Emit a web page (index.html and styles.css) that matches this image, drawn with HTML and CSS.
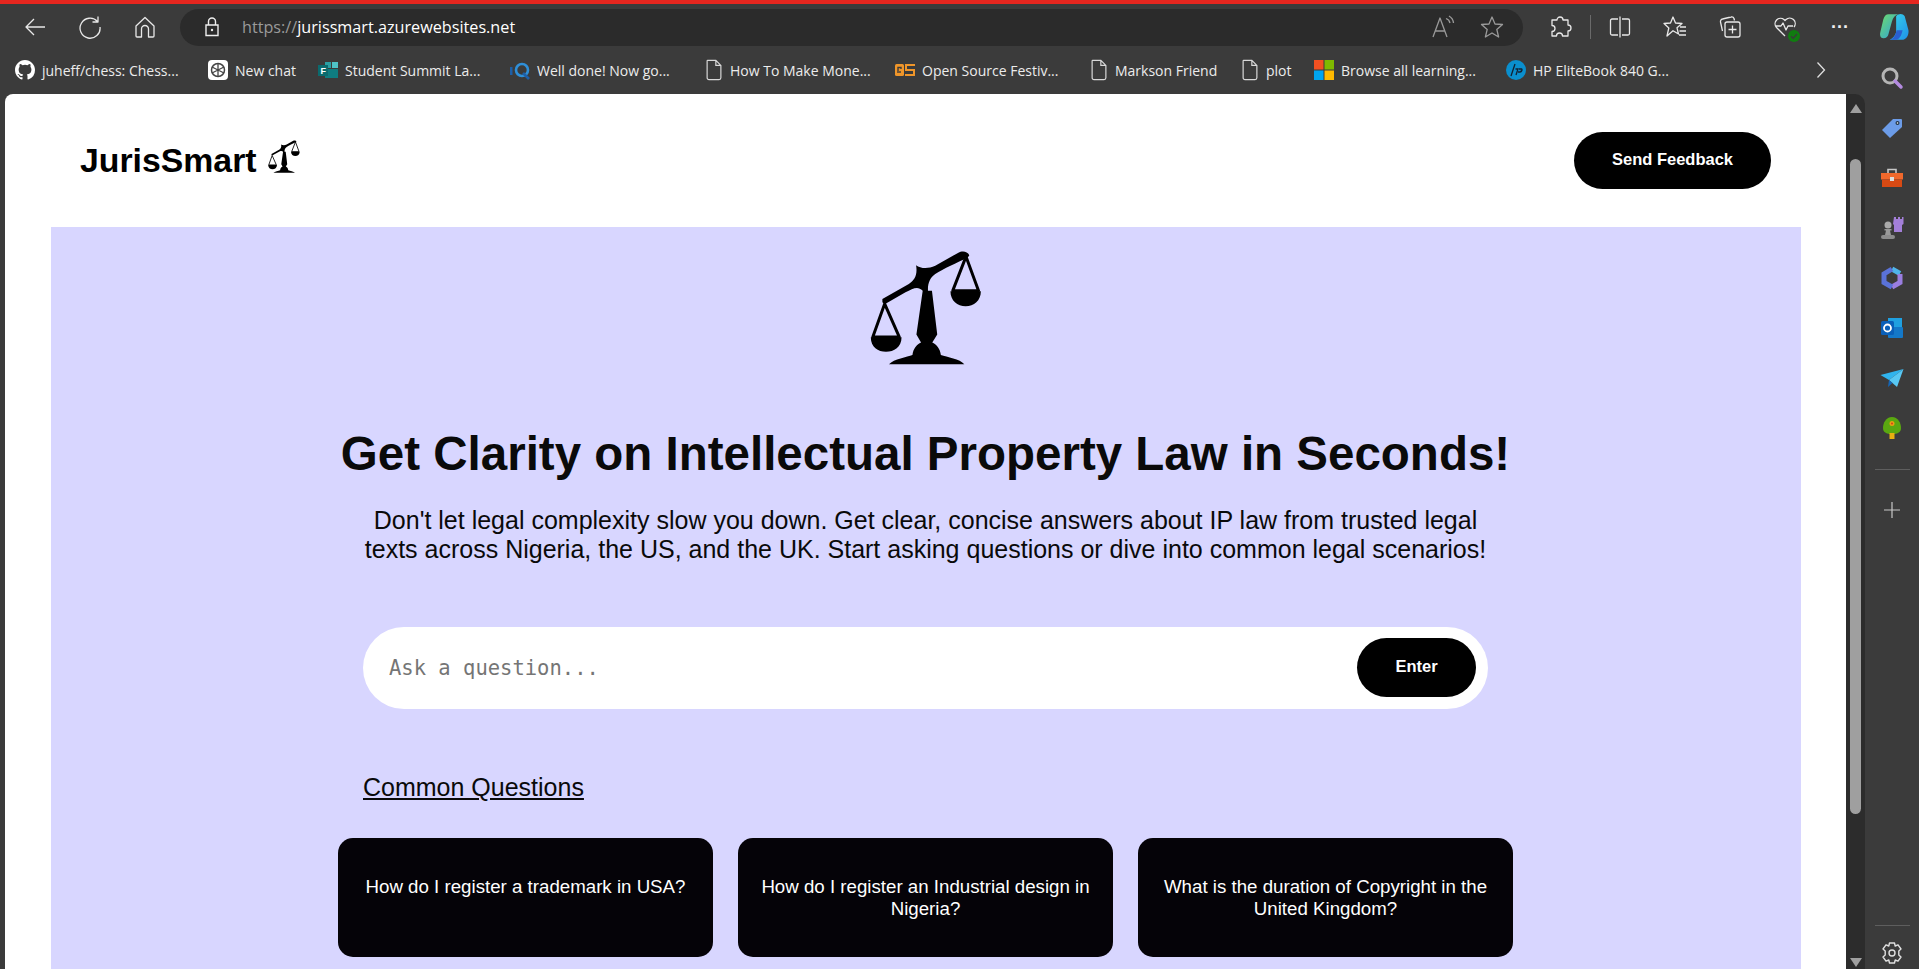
FILE: index.html
```html
<!DOCTYPE html>
<html lang="en">
<head>
  <meta charset="UTF-8" />
  <meta name="viewport" content="width=device-width, initial-scale=1" />
  <title>JurisSmart</title>
  <link rel="stylesheet" href="styles.css">
</head>
<body>

<svg class="defs" aria-hidden="true">
  <defs>
    <symbol id="scales" viewBox="88 42 338 348">
      <path d="M125 190 L205 145 C222 134 232 118 227 88 C240 98 262 100 285 90 L355 50 C365 44 382 44 388 58 L384 64 C350 82 310 98 285 115 C268 127 262 145 263 165 L275 165 L291 298 L276 322 C288 328 300 340 302 360 C320 366 360 372 373 388 L145 388 C160 372 200 366 216 360 C218 340 230 328 242 322 L228 298 L247 165 C232 150 218 158 195 170 L132 206 L125 200 Z" fill="#000"/>
      <path d="M132 205 L96 305 L176 305 Z M378 62 L338 165 L416 165 Z" fill="none" stroke="#000" stroke-width="9" stroke-linejoin="round"/>
      <path d="M90 306 L183 306 C183 336 160 350 136 350 C112 350 90 336 90 306 Z M331 167 L423 167 C423 196 402 212 377 212 C352 212 331 196 331 167 Z" fill="#000"/>
    </symbol>
    <symbol id="doc" viewBox="0 0 18 24">
      <path d="M2 1.5 H11 L16.5 7 V20.5 A2 2 0 0 1 14.5 22.5 H3.5 A2 2 0 0 1 1.5 20.5 V2 Z M11 1.5 V7 H16.5" fill="none" stroke="#d8d8d8" stroke-width="1.3"/>
    </symbol>
    <linearGradient id="copilot-a" x1="0" y1="0" x2="1" y2="1">
      <stop offset="0" stop-color="#38d6e8"/><stop offset="1" stop-color="#1f8fe8"/>
    </linearGradient>
    <linearGradient id="copilot-b" x1="0" y1="0" x2="1" y2="1">
      <stop offset="0" stop-color="#6fdc6a"/><stop offset="1" stop-color="#2b9fe0"/>
    </linearGradient>
  </defs>
</svg>

<header class="toolbar">
  <div class="nav-btns">
    <svg class="ico" viewBox="0 0 24 24"><path d="M22 12 H3 M11 4 L3 12 L11 20"/></svg>
    <svg class="ico" viewBox="0 0 24 24"><path d="M19.5 6.5 A10 10 0 1 0 22 12 M20 1.5 V7 H14.5"/></svg>
    <svg class="ico" viewBox="0 0 24 24"><path d="M3 11 L12 2.5 L21 11 V21 A1 1 0 0 1 20 22 H15.5 V14 A3.5 3.5 0 0 0 8.500 14 V22 H4 A1 1 0 0 1 3 21 Z"/></svg>
  </div>
  <div class="address">
    <svg class="lock" viewBox="0 0 16 20"><path d="M2 8 H14 V18.500 H2 Z M4.500 8 V4.500 A3.500 3.500 0 0 1 11.500 4.500 V8"/><circle cx="8" cy="13" r="1.200" fill="#eee" stroke="none"/></svg>
    <div class="url"><span class="proto">https://</span>jurissmart.azurewebsites.net</div>
    <svg class="ico dim read" viewBox="0 0 24 24"><path d="M2 22 L9 3 L16 22 M4.500 16 H13.500 M15 3.500 A6 6 0 0 1 19 8 M18 1 A9 9 0 0 1 22.500 8"/></svg>
    <svg class="ico dim" viewBox="0 0 24 24"><path d="M12 2 L15 9 L22.500 9.500 L16.800 14.400 L18.600 22 L12 18 L5.400 22 L7.200 14.400 L1.500 9.500 L9 9 Z"/></svg>
  </div>
  <div class="tools">
    <svg class="ico" viewBox="0 0 24 24"><path d="M9 5 A3 3 0 0 1 15 5 H20 V10 A3 3 0 0 1 20 16 V21 H14.500 A3 3 0 0 0 8.500 21 H4 V16.500 A3 3 0 0 0 4 10.500 V5 Z"/></svg>
    <span class="tool-sep"></span>
    <svg class="ico" viewBox="0 0 24 24"><path d="M10 4 H4 A1.500 1.500 0 0 0 2.500 5.500 V18.500 A1.500 1.500 0 0 0 4 20 H10 M14 4 H20 A1.500 1.500 0 0 1 21.500 5.500 V18.500 A1.500 1.500 0 0 1 20 20 H14 M12 1.500 V22.500"/></svg>
    <svg class="ico spaced" viewBox="0 0 24 24"><path d="M10 2 L12.500 8 L19 8.500 L14 12.800 L15.500 19 L10 15.700 L4 21 L5.800 13 L1 8.500 L7.500 8 Z M17 12 H23 M16.500 16 H23 M16 20 H23"/></svg>
    <svg class="ico spaced" viewBox="0 0 24 24"><path d="M4.500 16 L2.500 7 A2.500 2.500 0 0 1 4.500 4 L13 2 A2.500 2.500 0 0 1 16 3.500 L16.500 5.500 M9 7 H20 A2 2 0 0 1 22 9 V20 A2 2 0 0 1 20 22 H9 A2 2 0 0 1 7 20 V9 A2 2 0 0 1 9 7 Z M14.500 10.500 V18.500 M10.500 14.500 H18.500"/></svg>
    <span class="health spaced">
      <svg class="ico" viewBox="0 0 24 24"><path d="M12 21 L3.500 12.500 A5.500 5.500 0 0 1 11 4.500 L12 5.500 L13 4.500 A5.500 5.500 0 0 1 21 12 M2 11 H8 L10 8 L13 15 L15 11 H20"/></svg>
      <svg class="health-ok" viewBox="0 0 12 12"><circle cx="6" cy="6" r="6" fill="#107c10"/><path d="M3 6.300 L5.200 8.300 L9 4" fill="none" stroke="#3a3a3a" stroke-width="1.300"/></svg>
    </span>
    <span class="dots spaced">···</span>
    <svg class="copilot" viewBox="0 0 28 28"><path d="M9 2 H18 C15 3 13 5 12 9 L9 20 C8.500 23 7 24.500 4 24.500 C1.500 24.500 .5 22 1.200 19 L4 7 C5 3.500 6.500 2 9 2 Z" fill="url(#copilot-b)"/><path d="M16 4 C18 1.500 22 1 24 4 L27.500 17 C28 21 26 26 21 26 H10 C13 25 15 22 16 19 Z" fill="url(#copilot-a)"/><path d="M10 26 C14 25 15.500 21 16.500 17 H22 C21 22 19 26 15 26 Z" fill="#2a5fd0"/></svg>
  </div>
</header>

<div class="window">
  <div class="content">
    <nav class="bookmarks">
      <a class="bm">
        <svg class="fav" viewBox="0 0 16 16"><path fill="#fff" d="M8 0C3.580 0 0 3.580 0 8c0 3.540 2.290 6.530 5.470 7.590.4.070.55-.17.55-.38 0-.19-.01-.82-.01-1.490-2.010.37-2.530-.49-2.690-.94-.09-.23-.48-.94-.82-1.130-.28-.15-.68-.52-.01-.53.630-.01 1.080.58 1.230.82.720 1.210 1.870.87 2.330.66.070-.52.280-.87.510-1.070-1.780-.2-3.640-.89-3.640-3.950 0-.87.310-1.590.820-2.150-.08-.2-.36-1.020.08-2.120 0 0 .67-.21 2.200.82a7.500 7.500 0 0 1 4 0c1.530-1.040 2.200-.82 2.200-.82.440 1.100.160 1.920.080 2.120.510.560.820 1.270.820 2.150 0 3.070-1.870 3.750-3.650 3.950.290.250.540.730.540 1.480 0 1.070-.010 1.930-.010 2.200 0 .21.150.46.550.38A8.010 8.010 0 0 0 16 8c0-4.420-3.580-8-8-8z"/></svg>
        juheff/chess: Chess...
      </a>
      <a class="bm">
        <svg class="fav" viewBox="0 0 20 20"><rect width="20" height="20" rx="4" fill="#fff"/><circle cx="10" cy="10" r="6.500" fill="none" stroke="#444" stroke-width="1.500"/><path d="M10 3.500 V16.500 M4 7 L16 13 M16 7 L4 13" stroke="#444" stroke-width="1.300"/></svg>
        New chat
      </a>
      <a class="bm">
        <svg class="fav" viewBox="0 0 20 20"><rect x="7" y="2" width="6" height="6" fill="#2aa0a4"/><rect x="14" y="2" width="6" height="6" fill="#4fc3c7"/><rect x="7" y="9" width="13" height="9" fill="#0f7c80"/><rect y="5" width="10" height="11" fill="#0b6a6e"/><text x="2.500" y="14" class="fav-letter">F</text></svg>
        Student Summit La...
      </a>
      <a class="bm">
        <svg class="fav" viewBox="0 0 20 20"><rect x="0" y="7" width="2.500" height="8" fill="#1d5fa8"/><circle cx="12" cy="10" r="6" fill="none" stroke="#2f8fd8" stroke-width="2.600"/><path d="M13 13 L19 19" stroke="#1d5fa8" stroke-width="2.600"/></svg>
        Well done! Now go...
      </a>
      <a class="bm"><svg class="doc"><use href="#doc"/></svg>How To Make Mone...</a>
      <a class="bm">
        <svg class="fav" viewBox="0 0 20 12"><rect x="0" y="0" width="9" height="12" rx="1.500" fill="#f0962a"/><path d="M3 9 V3.500 H6 V5 M5 7 V9" stroke="#3a3a3a" stroke-width="1.400" fill="none"/><path d="M20 1 H11 V6 H19 V11 H10" fill="none" stroke="#f0962a" stroke-width="2"/></svg>
        Open Source Festiv...
      </a>
      <a class="bm"><svg class="doc"><use href="#doc"/></svg>Markson Friend</a>
      <a class="bm"><svg class="doc"><use href="#doc"/></svg>plot</a>
      <a class="bm">
        <svg class="fav" viewBox="0 0 20 20"><rect width="9.500" height="9.500" fill="#f25022"/><rect x="10.500" width="9.500" height="9.500" fill="#7fba00"/><rect y="10.500" width="9.500" height="9.500" fill="#00a4ef"/><rect x="10.500" y="10.500" width="9.500" height="9.500" fill="#ffb900"/></svg>
        Browse all learning...
      </a>
      <a class="bm">
        <svg class="fav" viewBox="0 0 20 20"><circle cx="10" cy="10" r="10" fill="#0a8fce"/><path d="M9 4 L5 16 M9.500 9 H12 L10 15 M13 9 H15.500 C16.500 9 16 12 14 12 H12" fill="none" stroke="#123" stroke-width="1.300"/></svg>
        HP EliteBook 840 G...
      </a>
      <svg class="bm-more" viewBox="0 0 10 18"><path d="M1.500 1.500 L8.500 9 L1.500 16.500"/></svg>
    </nav>

    <div class="viewport">
      <div class="page">
        <div class="site-head">
          <div class="logo">JurisSmart <svg class="logo-ico"><use href="#scales"/></svg></div>
          <button class="btn feedback">Send Feedback</button>
        </div>

        <main class="hero">
          <svg class="hero-ico"><use href="#scales"/></svg>
          <h1>Get Clarity on Intellectual Property Law in Seconds!</h1>
          <p class="lead">Don't let legal complexity slow you down. Get clear, concise answers about IP law from trusted legal texts across Nigeria, the US, and the UK. Start asking questions or dive into common legal scenarios!</p>

          <form class="ask">
            <input type="text" placeholder="Ask a question..." />
            <button class="btn enter" type="button">Enter</button>
          </form>

          <h2 class="common">Common Questions</h2>

          <div class="cards">
            <div class="card">How do I register a trademark in USA?</div>
            <div class="card">How do I register an Industrial design in Nigeria?</div>
            <div class="card">What is the duration of Copyright in the United Kingdom?</div>
          </div>
        </main>
      </div>

      <div class="scrollbar">
        <span class="arrow up"></span>
        <span class="thumb"></span>
        <span class="arrow down"></span>
      </div>
    </div>
  </div>

  <aside class="sidebar">
    <svg class="side-ico" viewBox="0 0 24 24"><circle cx="10" cy="10" r="7" fill="none" stroke="#b5b5b5" stroke-width="3"/><path d="M15 15 L21 21" stroke="#b48be0" stroke-width="3.500" stroke-linecap="round"/></svg>
    <svg class="side-ico" viewBox="0 0 24 24"><path d="M13 3 H21 A1 1 0 0 1 22 4 V11 L10 22 L2 14 Z" fill="#6c9ce8"/><circle cx="17.500" cy="7" r="2" fill="#234"/><circle cx="17.500" cy="7" r=".8" fill="#fff"/></svg>
    <svg class="side-ico" viewBox="0 0 24 24"><path d="M8 7 V3.500 H16 V7" fill="none" stroke="#c8c8c8" stroke-width="1.600"/><rect x="1" y="7" width="22" height="6.500" fill="#f0682c"/><rect x="2" y="13.500" width="20" height="7.500" fill="#d84a14"/><rect x="10" y="11" width="4" height="4" fill="#ddd"/></svg>
    <svg class="side-ico" viewBox="0 0 24 24"><path d="M14 1 H16 V3 H18 V1 H20 V3 H22 V1 H23.500 V8 L22 9 V16 H14 V9 L13 8 Z" fill="#a37fd8"/><circle cx="8" cy="9" r="3.500" fill="#aaa"/><path d="M4.500 13 H11.500 V14.500 H10 L11 19 H5 L6 14.500 H4.500 Z" fill="#999"/><rect x="1" y="19" width="14" height="4" rx="2" fill="#8c8c8c"/></svg>
    <svg class="side-ico" viewBox="0 0 24 24"><path d="M12 3 L20 7.500" fill="none" stroke="#4fb4ea" stroke-width="5"/><path d="M20 8 V16.500 L12 21" fill="none" stroke="#9a7ee0" stroke-width="5"/><path d="M12 21 L4 16.500 V8 L12 3" fill="none" stroke="#5a72d8" stroke-width="5"/></svg>
    <svg class="side-ico" viewBox="0 0 24 24"><rect x="8" y="2" width="14" height="9" fill="#1fa0e0"/><rect x="8" y="11" width="15" height="11" rx="1" fill="#1478c8"/><rect x="1" y="5" width="13" height="14" rx="1.500" fill="#0a5fb8"/><circle cx="7.500" cy="12" r="3.500" fill="none" stroke="#fff" stroke-width="1.800"/></svg>
    <svg class="side-ico" viewBox="0 0 24 24"><path d="M.5 9 L23.500 3 L9 14 Z" fill="#30b4ee"/><path d="M23.500 3 L17 21 L9 14 Z" fill="#58c8f4"/><path d="M9 14 L8 21 L12.500 17 Z" fill="#1466b8"/></svg>
    <svg class="side-ico" viewBox="0 0 24 24"><path d="M12 1 C18 1 21 7 21 12 C21 16 18 18 12 18 C6 18 3 16 3 12 C3 7 6 1 12 1 Z" fill="#5aa810"/><rect x="9.500" y="17" width="5" height="6" fill="#e8b010"/><circle cx="12" cy="7.500" r="2.500" fill="#e8a010"/><circle cx="12" cy="7.500" r="1" fill="#d04020"/></svg>
    <span class="side-sep"></span>
    <svg class="side-ico plus" viewBox="0 0 16 16"><path d="M8 0 V16 M0 8 H16" stroke="#c8c8c8" stroke-width="1.200"/></svg>
    <span class="side-sep bottom"></span>
    <svg class="side-ico gear" viewBox="0 0 24 24"><path d="M9.500 2 H14.500 L15.200 5 L18 3.800 L21 8 L18.800 10 V14 L21 16 L18 20.200 L15.200 19 L14.500 22 H9.500 L8.800 19 L6 20.200 L3 16 L5.200 14 V10 L3 8 L6 3.800 L8.800 5 Z" fill="none" stroke="#e0e0e0" stroke-width="1.400" stroke-linejoin="round"/><circle cx="12" cy="12" r="3" fill="none" stroke="#e0e0e0" stroke-width="1.400"/></svg>
  </aside>
</div>

</body>
</html>
```

FILE: styles.css
```css
* {
  box-sizing: border-box;
}
html, body {
  height: 100%;
}
body {
  margin: 0;
  height: 969px;
  overflow: hidden;
  background-color: #3b3b3b;
  color: #000;
  font-family: 'Liberation Sans', Arial, sans-serif;
  display: flex;
  flex-direction: column;
}
.defs {
  width: 0;
  height: 0;
  display: block;
}

/* browser chrome */
.toolbar {
  flex: none;
  height: 53px;
  border-top: 4px solid #e5261f;
  display: flex;
  align-items: center;
  padding: 0 10px 3px 23px;
}
.ico {
  width: 24px;
  height: 24px;
  fill: none;
  stroke: #e8e8e8;
  stroke-width: 1.300;
  stroke-linejoin: round;
  display: block;
}
.ico.dim {
  stroke: #9a9a9a;
}
.nav-btns {
  display: flex;
  gap: 31px;
}
.address {
  width: 1343px;
  height: 37px;
  margin-left: 23px;
  border-radius: 19px;
  background-color: #2b2b2b;
  display: flex;
  align-items: center;
  padding: 0 19px 0 24px;
  gap: 25px;
}
.lock {
  width: 16px;
  height: 20px;
  fill: none;
  stroke: #eee;
  stroke-width: 1.400;
  flex: none;
  margin-right: -3px;
}
.url {
  flex: 1;
  color: #fff;
  font: 16.200px 'Open Sans', sans-serif;
}
.proto {
  color: #9a9a9a;
}
.tools {
  flex: 1;
  display: flex;
  align-items: center;
  gap: 18px;
  margin-left: 25px;
}
.tools .spaced {
  margin-left: 13px;
}
.tool-sep {
  width: 1px;
  height: 24px;
  margin-right: -1px;
  background-color: #6a6a6a;
}
.health {
  position: relative;
  display: block;
}
.health-ok {
  position: absolute;
  right: -3px;
  bottom: -3px;
  width: 12px;
  height: 12px;
}
.dots {
  color: #eee;
  font: bold 18px 'Liberation Sans', sans-serif;
  width: 24px;
  text-align: center;
}
.copilot {
  width: 30px;
  height: 30px;
  display: block;
  margin-left: 9px;
}

.window {
  flex: 1;
  display: flex;
  min-height: 0;
}
.content {
  flex: 1;
  min-width: 0;
  display: flex;
  flex-direction: column;
}
.sidebar {
  flex: none;
  width: 54px;
  display: flex;
  flex-direction: column;
  align-items: center;
  padding-top: 0;
}
.side-ico {
  width: 24px;
  height: 24px;
  margin: 13px 0;
  flex: none;
  display: block;
}
.side-sep {
  width: 35px;
  height: 1px;
  background-color: #5e5e5e;
  margin-top: 16px;
  flex: none;
}
.side-sep.bottom {
  margin-top: auto;
}
.plus {
  width: 16px;
  height: 16px;
  margin: 32px 0 0;
}
.gear {
  margin: 15px 0 4px;
}

.bookmarks {
  flex: none;
  height: 41px;
  padding: 0 31px 7px 15px;
  display: grid;
  grid-template-columns: 193px 110px 192px 195px 190px 195px 151px 73px 192px 1fr 18px;
  align-items: center;
}
.bm {
  display: flex;
  align-items: center;
  gap: 7px;
  color: #ececec;
  font: 14px 'Open Sans', sans-serif;
  white-space: nowrap;
}
.fav {
  width: 20px;
  height: 20px;
  flex: none;
}
.fav-letter {
  font: bold 9px 'Liberation Sans', sans-serif;
  fill: #fff;
}
.doc {
  width: 18px;
  height: 22px;
  flex: none;
}
.bm-more {
  width: 10px;
  height: 18px;
  fill: none;
  stroke: #e0e0e0;
  stroke-width: 1.300;
}

.viewport {
  flex: 1;
  min-height: 0;
  display: flex;
  padding-left: 5px;
}
.scrollbar {
  flex: none;
  width: 19px;
  background-color: #2c2c2c;
  border-top-right-radius: 10px;
  display: flex;
  flex-direction: column;
  align-items: center;
  padding-top: 10px;
}
.arrow {
  width: 0;
  height: 0;
  border-left: 6px solid transparent;
  border-right: 6px solid transparent;
  flex: none;
}
.arrow.up {
  border-bottom: 9px solid #9f9f9f;
}
.arrow.down {
  border-top: 9px solid #9f9f9f;
  margin-top: auto;
  margin-bottom: 2px;
}
.thumb {
  width: 11px;
  height: 655px;
  margin-top: 46px;
  border-radius: 6px;
  background-color: #9f9f9f;
  flex: none;
}

/* the site itself */
.page {
  flex: 1;
  min-width: 0;
  background-color: #fff;
  border-top-left-radius: 8px;
  overflow: hidden;
  padding: 0 45px 0 46px;
}
.site-head {
  height: 133px;
  display: flex;
  align-items: center;
  justify-content: space-between;
  padding: 0 30px 0 29px;
}
.logo {
  font-size: 33.800px;
  font-weight: bold;
  display: flex;
  align-items: center;
  gap: 11px;
}
.logo-ico {
  width: 32px;
  height: 33px;
  margin-top: -9px;
}
.btn {
  background-color: #000;
  color: #fff;
  border: none;
  border-radius: 30px;
  padding: 0 0 2px;
  font-family: 'Liberation Sans', Arial, sans-serif;
  font-weight: bold;
  font-size: 16.500px;
  cursor: pointer;
}
.feedback {
  width: 197px;
  height: 57px;
}
.hero {
  background-color: #d8d6ff;
  display: flex;
  flex-direction: column;
  align-items: center;
  padding: 23px 1px 0 0;
  height: 800px;
}
.hero-ico {
  width: 112px;
  height: 115px;
  flex: none;
}
h1 {
  margin: 61px 0 0;
  font-size: 47.500px;
  line-height: 55px;
  color: #0a0a0a;
}
.lead {
  margin: 25px 0 0;
  width: 1130px;
  text-align: center;
  font-size: 25px;
  line-height: 29px;
  color: #0a0a0a;
}
.ask {
  margin-top: 63px;
  width: 1125px;
  height: 82px;
  flex: none;
  background-color: #fff;
  border-radius: 41px;
  display: flex;
  align-items: center;
  padding: 0 12px 1px 24px;
}
.ask input {
  flex: 1;
  border: none;
  outline: none;
  background: transparent;
  font: 20.500px 'DejaVu Sans Mono', monospace;
}
.ask input::placeholder {
  color: #757575;
}
.enter {
  width: 119px;
  height: 59px;
}
.common {
  width: 1125px;
  margin: 63px 0 0;
  font-size: 25px;
  line-height: 30px;
  font-weight: normal;
  text-decoration: underline;
  color: #0a0a0a;
}
.cards {
  margin-top: 36px;
  display: grid;
  grid-template-columns: repeat(3, 375px);
  gap: 25px;
}
.card {
  height: 119px;
  padding: 38px 20px;
  background-color: #050308;
  color: #fff;
  border-radius: 15px;
  text-align: center;
  font-size: 18.700px;
  line-height: 22px;
}
```
